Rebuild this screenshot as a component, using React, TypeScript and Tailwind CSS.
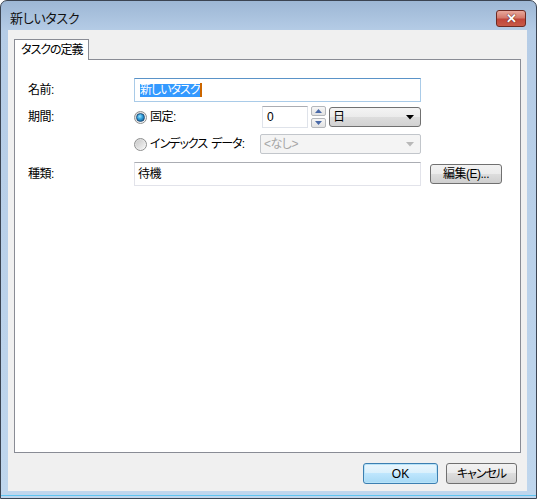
import React from "react";

function Radio({ checked }: { checked?: boolean }) {
  return (
    <span className="flex h-[13px] w-[13px] shrink-0 items-center justify-center rounded-full border border-[#8e8f8f] bg-[linear-gradient(135deg,#d4d4d4,#fdfdfd)]">
      {checked ? (
        <span className="h-[9px] w-[9px] rounded-full border border-[#1d4f7c] bg-[radial-gradient(circle_at_40%_35%,#9ae4ff_0%,#2d9bd8_45%,#0f4a78_100%)]" />
      ) : (
        <span className="h-[9px] w-[9px] rounded-full bg-[linear-gradient(135deg,#c9c9c9,#f4f4f4)]" />
      )}
    </span>
  );
}

function DownArrow({ color }: { color: string }) {
  return (
    <svg width="8" height="5" viewBox="0 0 8 5">
      <path d="M0 0h8L4 4.5z" fill={color} />
    </svg>
  );
}

function SpinButton({ up }: { up?: boolean }) {
  return (
    <div className="flex h-[10px] w-[15px] items-center justify-center rounded-[2px] border border-[#b4b7bb] bg-[linear-gradient(to_bottom,#f6f6f6,#e2e2e2)]">
      <svg width="7" height="4" viewBox="0 0 7 4">
        <path d={up ? "M0 4h7L3.5 0z" : "M0 0h7L3.5 4z"} fill="#4a6aa8" />
      </svg>
    </div>
  );
}

const GRAY_BTN =
  "flex items-center justify-center rounded-[3px] border border-[#707070] bg-[linear-gradient(to_bottom,#f2f2f2_0%,#ebebeb_50%,#dddddd_50%,#cfcfcf_100%)]";

export default function App() {
  return (
    <div className="h-[499px] w-[537px] bg-white font-['Liberation_Sans','Noto_Sans_CJK_JP',sans-serif] text-[12px] text-black [font-feature-settings:'palt']">
      <div className="flex h-full w-full flex-col rounded-t-[7px] border border-[#3b4452] bg-[linear-gradient(to_bottom,#9db7d5_0px,#b5cce6_30px,#bfd6ed_calc(100%_-_3px),#5ec4f0_calc(100%_-_3px),#5ec4f0_calc(100%_-_2px),#bfd6ed_calc(100%_-_2px))]">
        {/* title bar */}
        <div className="flex h-[29px] shrink-0 items-start justify-between pl-[9px] pr-[10px]">
          <span className="mt-[11px] text-[13px] leading-[14px] tracking-[-0.3px] text-[#111]">新しいタスク</span>
          <div className="mt-[9px] flex h-[17px] w-[30px] items-center justify-center rounded-[3px] border border-[#6e2a22] bg-[linear-gradient(to_bottom,#e9a99c_0%,#d47a6c_45%,#c0463a_55%,#c85a48_100%)]">
            <span className="text-[13px] font-bold leading-none text-white [text-shadow:0_0_1px_#5a1a12,0_0_1px_#5a1a12]">✕</span>
          </div>
        </div>

        {/* client area */}
        <div className="mb-[7px] ml-[7px] mr-[9px] flex flex-1 flex-col bg-[#f0f0f0] px-[6px] pt-[9px]">
          <div className="relative z-10 -mb-px flex h-[21px] w-[75px] items-center whitespace-nowrap border-x border-t border-[#898c95] bg-white pl-[6px] tracking-[-1px]">
            タスクの定義
          </div>
          <div className="flex h-[394px] flex-col border border-[#898c95] bg-white pl-[13px] pt-[18px]">
            {/* 名前 */}
            <div className="flex h-[24px] items-center">
              <span className="w-[106px] tracking-[-0.5px]">名前:</span>
              <div className="flex h-[24px] w-[287px] items-center border border-[#a9cbe8] border-t-[#5a93c8] pl-[5px]">
                <span className="whitespace-nowrap bg-[#3399ff] leading-[13px] tracking-[-1px] text-white">新しいタスク</span>
                <span className="h-[14px] w-[2px] bg-[#cc6600]" />
              </div>
            </div>

            {/* 期間 固定 */}
            <div className="mt-[4px] flex h-[22px] items-center">
              <span className="w-[106px] tracking-[-0.5px]">期間:</span>
              <div className="flex w-[128px] items-center gap-[3px]">
                <Radio checked />
                <span className="tracking-[-0.5px]">固定:</span>
              </div>
              <div className="flex h-[22px] w-[46px] items-center border border-[#dfe3ea] border-t-[#abadb3] pl-[4px]">
                0
              </div>
              <div className="ml-[3px] flex h-[22px] flex-col justify-between">
                <SpinButton up />
                <SpinButton />
              </div>
              <div className="ml-[3px] flex h-[20px] w-[92px] items-center justify-between rounded-[3px] border border-[#707070] bg-[linear-gradient(to_bottom,#f4f4f4_0%,#ebebeb_50%,#dddddd_50%,#d2d2d2_100%)] pl-[3px] pr-[6px]">
                <span>日</span>
                <DownArrow color="#000" />
              </div>
            </div>

            {/* インデックス データ */}
            <div className="mt-[6px] flex h-[20px] items-center">
              <span className="w-[106px]" />
              <div className="flex w-[126px] items-center gap-[3px]">
                <Radio />
                <span className="flex gap-[4px] whitespace-nowrap tracking-[-1px]">
                  <span>インデックス</span>
                  <span>データ:</span>
                </span>
              </div>
              <div className="flex h-[20px] w-[161px] items-center justify-between rounded-[2px] border border-[#c2c6cb] bg-[#f4f4f4] pl-[3px] pr-[6px] text-[#a6a6a6]">
                <span className="tracking-[-0.5px]">&lt;なし&gt;</span>
                <DownArrow color="#b9b9b9" />
              </div>
            </div>

            {/* 種類 */}
            <div className="mt-[8px] flex h-[24px] items-center">
              <span className="w-[106px] tracking-[-0.5px]">種類:</span>
              <div className="flex h-[24px] w-[287px] items-center border border-[#e2e3ea] border-t-[#abadb3] pl-[3px] tracking-[-0.5px]">
                待機
              </div>
              <button className={`ml-[9px] h-[20px] w-[72px] tracking-[-0.5px] ${GRAY_BTN}`}>
                編集(E)...
              </button>
            </div>
          </div>

          {/* buttons */}
          <div className="mt-[10px] flex justify-end gap-[8px] pr-[4px]">
            <button className="flex h-[21px] w-[75px] items-center justify-center rounded-[3px] border border-[#3c7fb1] bg-[linear-gradient(to_bottom,#eaf6fd_0%,#d9f0fc_50%,#bee6fd_50%,#a7d9f5_100%)] shadow-[inset_0_0_0_1px_#b8e3f8]">
              OK
            </button>
            <button className={`h-[21px] w-[71px] tracking-[-1px] ${GRAY_BTN}`}>
              キャンセル
            </button>
          </div>
        </div>
      </div>
    </div>
  );
}
